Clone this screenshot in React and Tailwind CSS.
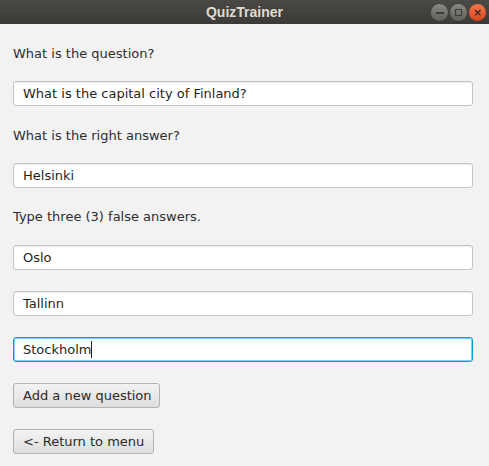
function Field({ value, focused }) {
  return (
    <div
      className={
        "h-[25px] w-[460px] rounded-[3px] bg-white flex items-center pl-[9px] text-[#1f1f1f] " +
        (focused
          ? "border border-[#039ed3] shadow-[inset_0_0_0_1px_#7fd0ee]"
          : "border border-[#c4c4c4] shadow-[inset_0_1px_1px_#ececec]")
      }
    >
      <span>{value}</span>
      {focused && <span className="w-px h-[17px] bg-[#222]" />}
    </div>
  );
}

function Button({ children, width }) {
  return (
    <button
      className={
        "h-[25px] rounded-[3px] border border-[#b3b3b3] bg-gradient-to-b from-[#f3f3f3] to-[#dedede] text-left pl-[9px] text-[#2a2a2a] " +
        width
      }
    >
      {children}
    </button>
  );
}

function Dot({ children, close }) {
  return (
    <div
      className={
        "w-[17px] h-[17px] rounded-full flex items-center justify-center " +
        (close
          ? "bg-gradient-to-b from-[#f6744a] to-[#d9461b]"
          : "bg-gradient-to-b from-[#8a8882] to-[#605e58]")
      }
    >
      {children}
    </div>
  );
}

export default function App() {
  return (
    <div className="w-[489px] h-[466px] bg-[#f2f2f2] text-[13px] text-[#2e2e2e] font-['DejaVu_Sans',sans-serif]">
      <div className="relative h-[24px] bg-gradient-to-b from-[#4b4945] to-[#3b3a36] flex items-center justify-center">
        <span className="font-['Liberation_Sans',sans-serif] font-bold text-[14px] text-[#dfdbd2]">QuizTrainer</span>
        <div className="absolute right-[3px] top-[4px] flex gap-[2px]">
          <Dot>
            <div className="w-[8px] h-[2px] bg-[#3c3b37]" />
          </Dot>
          <Dot>
            <div className="w-[7px] h-[7px] border-[1.5px] border-[#3c3b37]" />
          </Dot>
          <Dot close>
            <span className="text-[11px] leading-none text-[#3c2a22] font-bold -mt-px">×</span>
          </Dot>
        </div>
      </div>
      <div className="pl-[13px] pt-[21px] flex flex-col">
        <div className="h-[18px] leading-[18px]">What is the question?</div>
        <div className="mt-[18px]">
          <Field value="What is the capital city of Finland?" />
        </div>
        <div className="mt-[21px] h-[18px] leading-[18px]">What is the right answer?</div>
        <div className="mt-[18px]">
          <Field value="Helsinki" />
        </div>
        <div className="mt-[20px] h-[18px] leading-[18px]">Type three (3) false answers.</div>
        <div className="mt-[19px]">
          <Field value="Oslo" />
        </div>
        <div className="mt-[21px]">
          <Field value="Tallinn" />
        </div>
        <div className="mt-[21px]">
          <Field value="Stockholm" focused />
        </div>
        <div className="mt-[21px]">
          <Button width="w-[147px]">Add a new question</Button>
        </div>
        <div className="mt-[21px]">
          <Button width="w-[141px]">&lt;- Return to menu</Button>
        </div>
      </div>
    </div>
  );
}
